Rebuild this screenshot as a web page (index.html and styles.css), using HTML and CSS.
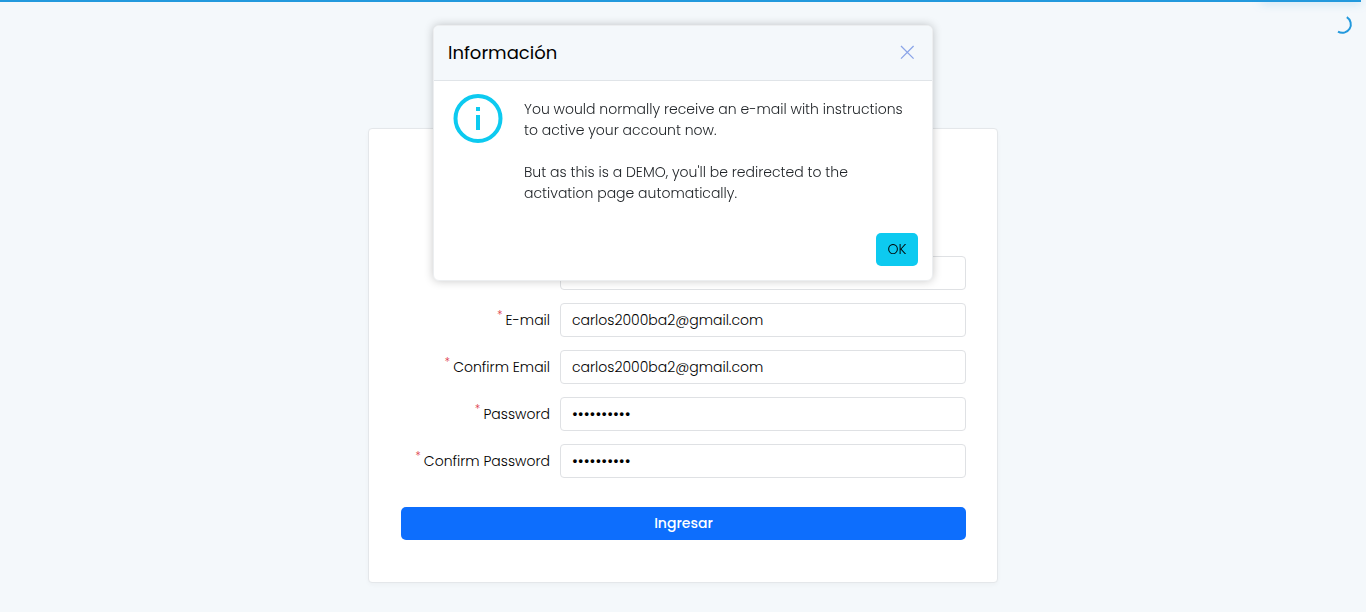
FILE: index.html
```html
<!DOCTYPE html>
<html lang="es">
<head>
<meta charset="utf-8">
<meta name="viewport" content="width=device-width, initial-scale=1">
<title>Registro</title>
<link rel="stylesheet" href="styles.css">
</head>
<body>
<div class="progress"><div class="progress-bar"></div></div>
<svg class="spinner" viewBox="0 0 18 18" aria-hidden="true"><path d="M13.8 2.2A8.2 8.2 0 0 1 5 16.6"/></svg>

<main class="page">
  <form class="card">
    <div class="row">
      <input class="field" type="text" aria-label="Username">
    </div>
    <div class="row">
      <label class="label" for="email"><span class="required">*</span>E-mail</label>
      <input class="field" id="email" type="email" value="carlos2000ba2@gmail.com">
    </div>
    <div class="row">
      <label class="label" for="email2"><span class="required">*</span>Confirm Email</label>
      <input class="field" id="email2" type="email" value="carlos2000ba2@gmail.com">
    </div>
    <div class="row">
      <label class="label" for="pass"><span class="required">*</span>Password</label>
      <input class="field field-password" id="pass" type="password" value="abcdefghij">
    </div>
    <div class="row">
      <label class="label" for="pass2"><span class="required">*</span>Confirm Password</label>
      <input class="field field-password" id="pass2" type="password" value="abcdefghij">
    </div>
    <button class="submit" type="button">Ingresar</button>
  </form>
</main>

<section class="modal" role="dialog" aria-labelledby="modal-title">
  <header class="modal-header">
    <h1 class="modal-title" id="modal-title">Información</h1>
    <button class="close" type="button" aria-label="Close">
      <svg class="close-icon" viewBox="0 0 14 14" aria-hidden="true"><path d="M1 0l12.6 12.6M13.6 0L1 12.6"/></svg>
    </button>
  </header>
  <div class="modal-body">
    <svg class="info-icon" viewBox="0 0 50 50" aria-hidden="true">
      <circle cx="25" cy="25.5" r="22.5"/>
      <path d="M23 14h4v4h-4zM23 22h4v15h-4z"/>
    </svg>
    <div class="message">
      <p>You would normally receive an e-mail with instructions<br>to active your account now.</p>
      <p>But as this is a DEMO, you'll be redirected to the<br>activation page automatically.</p>
    </div>
  </div>
  <footer class="modal-footer">
    <button class="ok" type="button">OK</button>
  </footer>
</section>
</body>
</html>
```
FILE: styles.css
```css
* {
  box-sizing: border-box;
}

body {
  margin: 0;
  background: #f4f8fb;
  color: #000;
  font: 300 14px/21px Poppins, Inter, "Open Sans", sans-serif;
}

button,
input {
  font: inherit;
}

.progress {
  position: fixed;
  top: 0;
  left: 0;
  right: 0;
}

.progress-bar {
  width: 99.6%;
  height: 2px;
  background: #29d;
}

.progress-bar::after {
  content: "";
  display: block;
  width: 100px;
  height: 2px;
  margin-left: auto;
  box-shadow: 0 0 10px rgba(34, 153, 221, .6);
}

.spinner {
  position: fixed;
  top: 15px;
  right: 15px;
  width: 18px;
  height: 18px;
  overflow: visible;
  fill: none;
  stroke: #29d;
  stroke-width: 2;
}

.page {
  display: flex;
  justify-content: center;
  padding: 128px 16px 29px;
}

.card {
  display: flex;
  flex-direction: column;
  gap: 13px;
  width: 100%;
  max-width: 630px;
  padding: 127px 31px 42px 32px;
  background: #fff;
  border: 1px solid #e4e7ea;
  border-radius: 4px;
  box-shadow: 0 2px 4px rgba(0, 0, 0, .03);
}

.row {
  display: grid;
  grid-template-columns: 149px 1fr;
  align-items: center;
  column-gap: 10px;
}

.label {
  display: flex;
  justify-content: flex-end;
  gap: 3px;
}

.required {
  margin-top: -6px;
  color: #dc3545;
  font-size: 12px;
}

.field {
  grid-column: 2;
  width: 100%;
  height: 34px;
  padding: 0 11px;
  color: #000;
  background: #fff;
  border: 1px solid #dfe1e4;
  border-radius: 4px;
  outline: 0;
}

.field-password {
  font-size: 16px;
}

.submit {
  height: 33px;
  margin-top: 16px;
  padding: 0;
  color: #fff;
  background: #0d6efd;
  border: 0;
  border-radius: 5px;
  font-weight: 500;
}

.modal {
  position: fixed;
  top: 25px;
  left: 0;
  right: 0;
  width: 500px;
  max-width: 100%;
  margin: 0 auto;
  overflow: hidden;
  background: #fff;
  border: 1px solid #eceef0;
  border-radius: 6px;
  box-shadow: 0 0 10px rgba(0, 0, 0, .22);
}

.modal-header {
  display: flex;
  align-items: center;
  justify-content: space-between;
  padding: 13px 18px 14px 14px;
  background: #f4f8fb;
  border-bottom: 1px solid #e0e4e8;
}

.modal-title {
  margin: 0;
  font-size: 18px;
  font-weight: 400;
  line-height: 27px;
}

.close {
  display: flex;
  padding: 0;
  background: none;
  border: 0;
}

.close-icon {
  width: 14px;
  height: 14px;
  overflow: visible;
  fill: none;
  stroke: #8ba5e8;
  stroke-width: 1.3;
}

.modal-body {
  display: flex;
  align-items: flex-start;
  gap: 21px;
  padding: 12px 14px 0 19px;
}

.info-icon {
  flex: none;
  width: 50px;
  height: 50px;
  fill: #0dcaf0;
}

.info-icon circle {
  fill: none;
  stroke: #0dcaf0;
  stroke-width: 4;
}

.message {
  padding-top: 6px;
  color: #212529;
}

.message p {
  margin: 0 0 21px;
}

.modal-footer {
  display: flex;
  justify-content: flex-end;
  padding: 8px 14px 14px;
}

.ok {
  width: 42px;
  height: 33px;
  padding: 0;
  color: #000;
  background: #0dcaf0;
  border: 0;
  border-radius: 5px;
}
```
